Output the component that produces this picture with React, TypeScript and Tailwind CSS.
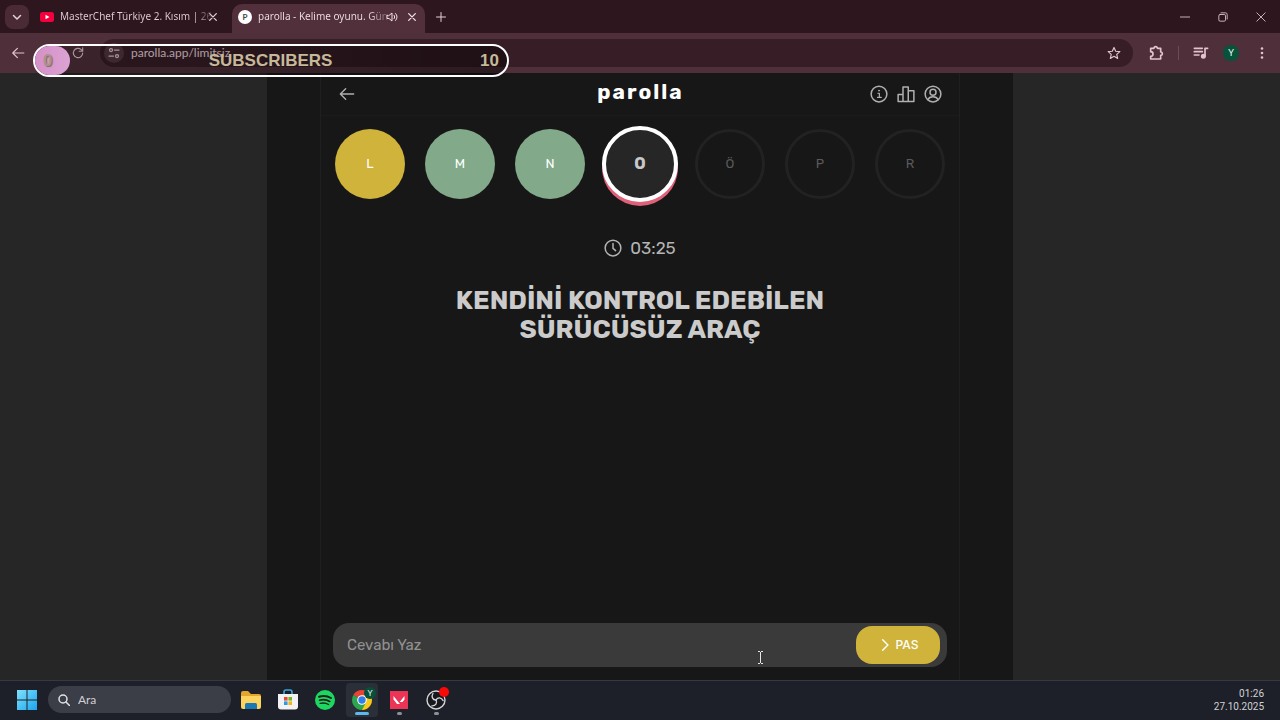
import type { ReactNode } from "react";

type LetterState = "passed" | "correct" | "active" | "idle";

const letters: { char: string; state: LetterState }[] = [
  { char: "L", state: "passed" },
  { char: "M", state: "correct" },
  { char: "N", state: "correct" },
  { char: "O", state: "active" },
  { char: "Ö", state: "idle" },
  { char: "P", state: "idle" },
  { char: "R", state: "idle" },
];

const letterStyles: Record<LetterState, string> = {
  passed: "size-[70px] bg-[#cfb33a] text-white text-[13px]",
  correct: "size-[70px] bg-[#82aa8a] text-white text-[13px]",
  active:
    "size-[76px] border-4 border-white bg-[#262626] text-[#c8c8c8] text-base font-bold shadow-[0_4px_0_#e0607a]",
  idle: "size-[70px] border-3 border-[#222222] text-[#5a5a5a] text-[13px]",
};

function Icon({
  children,
  className,
  width = 2,
}: {
  children: ReactNode;
  className: string;
  width?: number;
}) {
  return (
    <svg
      viewBox="0 0 24 24"
      fill="none"
      stroke="currentColor"
      strokeWidth={width}
      strokeLinecap="round"
      strokeLinejoin="round"
      className={`shrink-0 ${className}`}
      aria-hidden="true"
    >
      {children}
    </svg>
  );
}

function CloseIcon({ className }: { className: string }) {
  return (
    <Icon className={className} width={3}>
      <path d="M4 4l16 16M20 4L4 20" />
    </Icon>
  );
}

function TabStrip() {
  return (
    <div className="flex h-[33px] shrink-0 items-stretch bg-[#2e161e] text-[#e6cfd6]">
      <button
        aria-label="Sekmelerde ara"
        className="mt-[5px] ml-[5px] flex size-6 items-center justify-center rounded-lg bg-[#4a2b35]"
      >
        <Icon className="size-3" width={3}>
          <path d="M5 9l7 7 7-7" />
        </Icon>
      </button>
      <div className="flex w-[203px] items-center pr-3 pl-[11px]">
        <svg viewBox="0 0 28 20" className="h-[10px] w-3.5 shrink-0" aria-hidden="true">
          <rect width="28" height="20" rx="5" fill="#f5003d" />
          <path d="M11 5.500l8 4.500-8 4.500z" fill="#fff" />
        </svg>
        <span className="ml-1.5 min-w-0 flex-1 whitespace-nowrap font-['Noto_Sans',sans-serif] text-[10px]">
          <span className="bg-linear-to-r from-[#e6cfd6] from-88% to-[#4a333b] bg-clip-text text-transparent">
            MasterChef Türkiye 2. Kısım | 26
          </span>
        </span>
        <button aria-label="Sekmeyi kapat" className="p-0.5">
          <CloseIcon className="size-2.5" />
        </button>
      </div>
      <div className="mt-1 flex w-[193px] items-center rounded-t-[10px] bg-[#512f3b] pr-1.5 pb-1 pl-1.5 text-[#f3e4e9]">
        <span className="flex size-3.5 shrink-0 items-center justify-center rounded-full bg-white text-[8px] leading-none font-bold text-[#444]">
          P
        </span>
        <span className="ml-1.5 w-[124px] whitespace-nowrap font-['Noto_Sans',sans-serif] text-[10px]">
          <span className="bg-linear-to-r from-[#f3e4e9] from-85% to-[#765763] bg-clip-text text-transparent">
            parolla - Kelime oyunu. Gün
          </span>
        </span>
        <button aria-label="Sekmenin sesini kapat" className="ml-1">
          <Icon className="size-3" width={2}>
            <path d="M2 9v6h4l6 5V4L6 9zM16 8.500c1.800 2 1.800 5 0 7M19 5c4 4 4 10 0 14" />
          </Icon>
        </button>
        <button aria-label="Sekmeyi kapat" className="ml-auto p-0.5">
          <CloseIcon className="size-2.5" />
        </button>
      </div>
      <button aria-label="Yeni sekme" className="ml-2.5">
        <Icon className="size-3" width={2}>
          <path d="M12 3v18M3 12h18" />
        </Icon>
      </button>
      <div className="ml-auto flex items-center gap-7 pr-3.5">
        <button aria-label="Simge durumuna küçült">
          <Icon className="size-2.5">
            <path d="M0 12h24" />
          </Icon>
        </button>
        <button aria-label="Önceki boyut">
          <Icon className="size-2.5">
            <rect x="2" y="6" width="16" height="16" rx="3" />
            <path d="M7 2h11a4 4 0 0 1 4 4v11" />
          </Icon>
        </button>
        <button aria-label="Kapat">
          <Icon className="size-2.5">
            <path d="M2 2l20 20M22 2L2 22" />
          </Icon>
        </button>
      </div>
    </div>
  );
}

function Toolbar() {
  return (
    <div className="flex h-10 shrink-0 items-center bg-[#4e2f3a] pr-[11px] pl-[11px] text-[#e2c4ce]">
      <button aria-label="Geri">
        <Icon className="size-3.5" width={2}>
          <path d="M22 12H3M11 4l-8 8 8 8" />
        </Icon>
      </button>
      <button aria-label="Yenile" className="ml-[46px]">
        <Icon className="size-3.5" width={2}>
          <path d="M20 12a8 8 0 1 1-2.500-5.800L20 9M20 3v6h-6" />
        </Icon>
      </button>
      <div className="ml-[15px] flex h-7 flex-1 items-center rounded-full bg-[#371d26] pr-3 pl-1">
        <button
          aria-label="Site bilgileri"
          className="flex size-5 items-center justify-center rounded-full bg-[#53353f]"
        >
          <Icon className="size-3" width={2.5}>
            <circle cx="6" cy="6" r="3" />
            <path d="M13 6h9M2 18h9" />
            <circle cx="18" cy="18" r="3" />
          </Icon>
        </button>
        <label htmlFor="address" className="sr-only">
          Adres
        </label>
        <input
          id="address"
          defaultValue="parolla.app/limitsiz"
          className="ml-[7px] min-w-0 flex-1 bg-transparent text-xs text-[#e6d4da] outline-none"
        />
        <button aria-label="Bu sekmeye yer işareti koy">
          <Icon className="size-3.5" width={2}>
            <path d="M12 2.500l2.900 6.500 7.100.7-5.300 4.700 1.600 7-6.300-3.700-6.300 3.700 1.600-7L2 9.700 9.100 9z" />
          </Icon>
        </button>
      </div>
      <button aria-label="Uzantılar" className="ml-[15px]">
        <Icon className="size-4" width={2.5}>
          <path d="M4 5h5a2.500 2.500 0 0 1 5 0h5v5.500a2.500 2.500 0 0 1 0 5V21H4v-4a2.500 2.500 0 0 0 0-7z" />
        </Icon>
      </button>
      <span className="ml-3.5 h-3.5 w-px bg-[#6d4c57]" />
      <button aria-label="Medya denetimi" className="ml-3.5">
        <Icon className="size-4" width={2.5}>
          <path d="M2 5h12M2 10h12M2 15h7M18 17V5h4" />
          <circle cx="15.500" cy="17" r="2.500" fill="currentColor" />
        </Icon>
      </button>
      <button
        aria-label="Profil"
        className="ml-3.5 flex size-4 items-center justify-center rounded-full bg-[#06523a] text-[9px] text-white"
      >
        Y
      </button>
      <button aria-label="Menü" className="ml-4">
        <svg viewBox="0 0 14 14" className="size-3.5" fill="currentColor" aria-hidden="true">
          <circle cx="7" cy="2.500" r="1.300" />
          <circle cx="7" cy="7" r="1.300" />
          <circle cx="7" cy="11.500" r="1.300" />
        </svg>
      </button>
    </div>
  );
}

function SubscriberGoal() {
  return (
    <div className="absolute top-11 left-[33px] flex h-[33px] w-[476px] items-center justify-between rounded-full border-2 border-white bg-linear-to-r from-black/25 from-30% to-black/45 pr-2 font-['Liberation_Sans',sans-serif] text-[17px] font-bold text-[#c5b99a]">
      <span className="flex h-full w-[35px] items-center rounded-full bg-linear-to-r from-[#d68fc8] to-[#dba3d3] pl-2 text-[#a89489] [text-shadow:1px_1px_1px_#7d6a68]">
        0
      </span>
      <span className="mr-[9px]">SUBSCRIBERS</span>
      <span>10</span>
    </div>
  );
}

function Game() {
  return (
    <main className="flex min-h-0 flex-1 justify-center bg-[#262626] font-[Rubik,Roboto,sans-serif]">
      <div className="flex w-full max-w-[746px] justify-center bg-[#171717]">
        <div className="flex w-full max-w-[640px] flex-col border-x border-[#1f1f1f]">
          <header className="grid h-[43px] grid-cols-3 items-center border-b border-[#1b1b1b] pr-[17px] pl-[18px] text-[#b0b0b0]">
            <button aria-label="Geri dön" className="justify-self-start">
              <Icon className="size-4" width={2}>
                <path d="M22 12H2M10 4l-8 8 8 8" />
              </Icon>
            </button>
            <h1 className="justify-self-center pb-1 text-[21px] leading-6 font-bold tracking-[2px] text-white">
              parolla
            </h1>
            <div className="flex gap-[9px] justify-self-end">
              <button aria-label="Bilgi">
                <Icon className="size-[18px]">
                  <circle cx="12" cy="12" r="10.500" />
                  <path d="M10.500 11H12.500V16.500M10 16.500h5" strokeWidth="1.600" />
                  <circle cx="12" cy="7.500" r=".7" fill="currentColor" strokeWidth="1" />
                </Icon>
              </button>
              <button aria-label="İstatistik">
                <Icon className="size-[18px]">
                  <path d="M1.500 22V12.500H8V22zM8 22V2.500h7V22zM15 22V7.500h7.500V22z" />
                </Icon>
              </button>
              <button aria-label="Profil">
                <Icon className="size-[18px]">
                  <circle cx="12" cy="12" r="10.500" />
                  <circle cx="12" cy="9.500" r="4" />
                  <path d="M5 19.500c1.500-3 4-4 7-4s5.500 1 7 4" />
                </Icon>
              </button>
            </div>
          </header>

          <ol className="grid h-[95px] grid-cols-7 items-center justify-items-center px-1">
            {letters.map(({ char, state }) => (
              <li
                key={char}
                className={`flex items-center justify-center rounded-full ${letterStyles[state]}`}
              >
                {char}
              </li>
            ))}
          </ol>

          <div className="mt-[25px] flex items-center justify-center gap-2 text-[17px] leading-6 text-[#b4b4b4]">
            <Icon className="size-[18px]">
              <circle cx="12" cy="12" r="10.500" />
              <path d="M12 6v6.500l3.500 3" />
            </Icon>
            <time>03:25</time>
          </div>

          <h2 className="mx-auto mt-[26px] max-w-[400px] text-center text-[26px] leading-[29px] font-bold text-[#cbcbcb]">
            KENDİNİ KONTROL EDEBİLEN SÜRÜCÜSÜZ ARAÇ
          </h2>

          <form
            onSubmit={(event) => event.preventDefault()}
            className="mx-3 mt-auto mb-[13px] flex h-11 items-center rounded-2xl bg-[#3a3a3a] pr-[7px] pl-3.5"
          >
            <label htmlFor="answer" className="sr-only">
              Cevap
            </label>
            <input
              id="answer"
              placeholder="Cevabı Yaz"
              className="h-8 min-w-0 flex-1 bg-transparent text-[15px] text-white outline-none placeholder:text-[#919191]"
            />
            <button className="flex h-[38px] w-[84px] items-center justify-center gap-1 rounded-2xl bg-[#cfb33a] font-[Inter,sans-serif] text-xs font-medium text-white">
              <Icon className="size-3.5" width={2.5}>
                <path d="M8 3l9 9-9 9" />
              </Icon>
              PAS
            </button>
          </form>
        </div>
      </div>
    </main>
  );
}

function TaskbarApp({
  label,
  running,
  focused,
  children,
}: {
  label: string;
  running?: boolean;
  focused?: boolean;
  children: ReactNode;
}) {
  return (
    <button
      aria-label={label}
      className={`relative flex h-[34px] w-8 items-center justify-center rounded ${focused ? "bg-[#2b3038]" : ""}`}
    >
      {children}
      {focused && (
        <span className="absolute bottom-0.5 h-[3px] w-3.5 rounded-full bg-[#60b8ea]" />
      )}
      {running && (
        <span className="absolute bottom-0.5 h-[3px] w-[5px] rounded-full bg-[#8d9096]" />
      )}
    </button>
  );
}

function Taskbar() {
  return (
    <footer className="flex h-10 shrink-0 items-center border-t border-[#343a40] bg-[#1d2028] pr-4 pb-0.5 pl-[17px]">
      <button aria-label="Başlat">
        <svg viewBox="0 0 20 20" className="size-5" aria-hidden="true">
          <defs>
            <linearGradient id="start" x1="0" y1="0" x2="1" y2="1">
              <stop offset="0" stopColor="#7fe0fb" />
              <stop offset="1" stopColor="#1ba4ee" />
            </linearGradient>
          </defs>
          <path
            d="M0 0h9.500v9.500H0zM10.500 0H20v9.500h-9.500zM0 10.500h9.500V20H0zM10.500 10.500H20V20h-9.500z"
            fill="url(#start)"
          />
        </svg>
      </button>
      <label className="ml-[11px] flex h-[27px] w-[183px] items-center gap-2 rounded-full bg-[#3b3e47] pl-2.5 text-[#e2e2e6]">
        <Icon className="size-3" width={3}>
          <circle cx="10" cy="10" r="8" />
          <path d="M16 16l7 7" />
        </Icon>
        <input
          aria-label="Ara"
          placeholder="Ara"
          className="min-w-0 flex-1 bg-transparent text-xs outline-none placeholder:text-[#d0d0d4]"
        />
      </label>
      <div className="ml-1 flex gap-[5px]">
        <TaskbarApp label="Dosya Gezgini">
          <svg viewBox="0 0 22 20" className="h-5 w-[22px]" aria-hidden="true">
            <path d="M1 3a2 2 0 0 1 2-2h5l3 3h8a2 2 0 0 1 2 2v11H1z" fill="#e3a52b" />
            <path d="M1 6h20v11a2 2 0 0 1-2 2H3a2 2 0 0 1-2-2z" fill="#fbd35e" />
            <path d="M5 19v-4.500A1.500 1.500 0 0 1 6.500 13h9a1.500 1.500 0 0 1 1.500 1.500V19z" fill="#1b78b5" />
          </svg>
        </TaskbarApp>
        <TaskbarApp label="Microsoft Store">
          <svg viewBox="0 0 20 21" className="h-[21px] w-5" aria-hidden="true">
            <path d="M6 6V3a2 2 0 0 1 2-2h4a2 2 0 0 1 2 2v3" fill="none" stroke="#3ca4dc" strokeWidth="1.600" />
            <path d="M0 5h20v12.500a3 3 0 0 1-3 3H3a3 3 0 0 1-3-3z" fill="#f2f2f4" />
            <path d="M6 8h3.600v3.600H6z" fill="#e64a2e" />
            <path d="M10.400 8H14v3.600h-3.600z" fill="#72b626" />
            <path d="M6 12.400h3.600V16H6z" fill="#2a9be0" />
            <path d="M10.400 12.400H14V16h-3.600z" fill="#f0b51c" />
          </svg>
        </TaskbarApp>
        <TaskbarApp label="Spotify">
          <svg viewBox="0 0 20 20" className="size-5" aria-hidden="true">
            <circle cx="10" cy="10" r="10" fill="#1ed760" />
            <g fill="none" stroke="#14241a" strokeLinecap="round">
              <path d="M4 6.800c4-1.200 8.500-.8 12 1.200" strokeWidth="2" />
              <path d="M4.600 10.200c3.500-1 7-.6 10.200 1.200" strokeWidth="1.700" />
              <path d="M5.200 13.400c3-.8 5.800-.5 8.400 1.100" strokeWidth="1.400" />
            </g>
          </svg>
        </TaskbarApp>
        <TaskbarApp label="Google Chrome" focused>
          <svg viewBox="0 0 24 24" className="size-6" aria-hidden="true">
            <path d="M12 12L3.340 7A10 10 0 0 1 20.660 7z" fill="#e74435" />
            <path d="M12 12l8.660-5A10 10 0 0 1 12 22z" fill="#fbc817" />
            <path d="M3.340 7A10 10 0 0 0 12 22l4-7.500-4-2.500z" fill="#2da44f" />
            <path d="M12 7.300h9L16.300 14.500z" fill="#fbc817" />
            <circle cx="12" cy="12" r="4.800" fill="#fff" />
            <circle cx="12" cy="12" r="3.700" fill="#347de8" />
          </svg>
          <span className="absolute top-1 right-0.5 flex size-3 items-center justify-center rounded-full bg-[#07503b] text-[8px] text-white">
            Y
          </span>
        </TaskbarApp>
        <TaskbarApp label="Valorant" running>
          <svg viewBox="0 0 18 18" className="size-[18px]" aria-hidden="true">
            <path d="M0 0h18v18H0z" fill="#ec3456" />
            <path d="M3.500 5l6.500 8H7L3.500 8.500zM14.500 5v3.500L12.500 11H9.700z" fill="#fff" />
          </svg>
        </TaskbarApp>
        <TaskbarApp label="OBS Studio" running>
          <svg viewBox="0 0 20 20" className="size-5" aria-hidden="true">
            <circle cx="10" cy="10" r="9" fill="#17191e" stroke="#d5d5d8" strokeWidth="1.400" />
            <g fill="none" stroke="#d5d5d8" strokeWidth="1.300" strokeLinecap="round">
              <path d="M7 3.500C5 6.500 6.500 10 10 10" />
              <path d="M7 3.500C5 6.500 6.500 10 10 10" transform="rotate(120 10 10)" />
              <path d="M7 3.500C5 6.500 6.500 10 10 10" transform="rotate(240 10 10)" />
            </g>
          </svg>
          <span className="absolute top-1 right-[3px] size-2.5 rounded-full bg-[#fb0808]" />
        </TaskbarApp>
      </div>
      <div className="ml-auto text-right font-[Roboto,sans-serif] text-[10px] leading-[13px] text-[#d2d2d5]">
        <div>01:26</div>
        <div>27.10.2025</div>
      </div>
    </footer>
  );
}

function TextCursor() {
  return (
    <svg
      viewBox="0 0 7 13"
      className="pointer-events-none absolute top-[651px] left-[757px] h-[13px] w-[7px]"
      fill="none"
      stroke="#e6e6e6"
      aria-hidden="true"
    >
      <path d="M1 .5h2M4 .5h2M3.500 1v11M1 12.500h2M4 12.500h2" />
    </svg>
  );
}

export default function App() {
  return (
    <div className="relative flex h-screen flex-col overflow-hidden font-[Lato,'Noto_Sans',sans-serif]">
      <TabStrip />
      <Toolbar />
      <Game />
      <Taskbar />
      <SubscriberGoal />
      <TextCursor />
    </div>
  );
}
